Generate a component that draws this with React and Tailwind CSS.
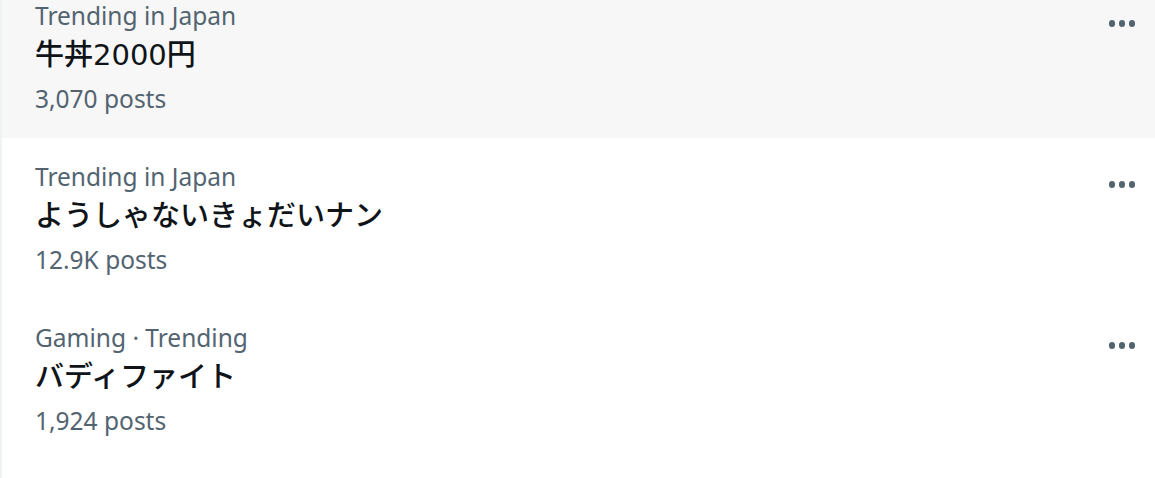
import React from 'react';

const trends = [
  { context: 'Trending in Japan', name: '牛丼2000円', posts: '3,070 posts', active: true },
  { context: 'Trending in Japan', name: 'ようしゃないきょだいナン', posts: '12.9K posts' },
  { context: 'Gaming · Trending', name: 'バディファイト', posts: '1,924 posts' },
];

function MoreDots() {
  return (
    <div className="flex gap-[3.5px] mt-[20px] mr-[20px]">
      <span className="w-[6.5px] h-[6.5px] rounded-full bg-[#536471]" />
      <span className="w-[6.5px] h-[6.5px] rounded-full bg-[#536471]" />
      <span className="w-[6.5px] h-[6.5px] rounded-full bg-[#536471]" />
    </div>
  );
}

function TrendRow({ trend }) {
  return (
    <div className={`flex justify-between h-[161px] pl-[33px] pt-[23px] ${trend.active ? 'bg-[#f7f7f7]' : 'bg-white'}`}>
      <div className="flex flex-col">
        <div className="text-[24.5px] leading-[32px] text-[#536471]">{trend.context}</div>
        <div
          className="text-[29px] leading-[46px] font-medium text-[#0f1419]"
          style={{ fontFamily: '"DejaVu Sans", "Noto Sans CJK JP", sans-serif' }}
        >
          {trend.name}
        </div>
        <div className="text-[24.5px] leading-[42px] text-[#536471]">{trend.posts}</div>
      </div>
      <MoreDots />
    </div>
  );
}

export default function App() {
  return (
    <div
      className="w-[1155px] h-[478px] overflow-hidden bg-white border-l-2 border-[#eff3f4]"
      style={{ fontFamily: '"Noto Sans", "Noto Sans CJK JP", sans-serif' }}
    >
      <div className="-mt-[23px]">
        {trends.map((t, i) => (
          <TrendRow key={i} trend={t} />
        ))}
      </div>
    </div>
  );
}
